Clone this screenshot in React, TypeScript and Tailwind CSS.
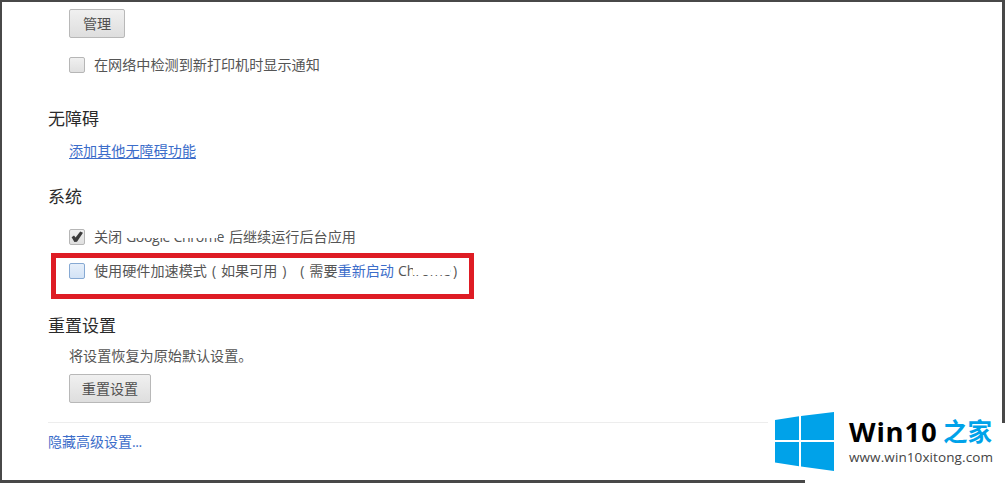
import type { ReactNode } from "react"
import clsx from "clsx"

const cjk = "font-['Open_Sans','Noto_Sans_CJK_SC',sans-serif]"

function Heading({ children }: { children: ReactNode }) {
    return <h2 className="h-6 text-[17px] leading-6 text-[#2a2a2a]">{children}</h2>
}

function Button({ className, children }: { className?: string, children: ReactNode }) {
    return (
        <button
            type="button"
            className={clsx(
                "flex h-[29px] items-center justify-center rounded-[2px] border border-[#b8b8b8] bg-linear-to-b from-[#f0f0f0] to-[#dedede] text-[14.1px] leading-5 text-[#505050]",
                className
            )}
        >
            {children}
        </button>
    )
}

function Checkbox({ checked, focused }: { checked?: boolean, focused?: boolean }) {
    return (
        <span
            className={clsx(
                "flex size-4 shrink-0 items-center justify-center rounded-[2px] border",
                focused
                    ? "border-[#86a9d3] bg-linear-to-b from-[#e6effa] to-[#d3e3f6]"
                    : "border-[#b6b6b6] bg-linear-to-b from-[#f0f0f0] to-[#e0e0e0]"
            )}
        >
            {checked && (
                <svg viewBox="0 0 14 14" className="size-3.5">
                    <path d="M1.6 7.2 4 5.6 5.6 7.6 10.2 1.6 13 2.8 7 11.8 4.4 12Z" fill="#3c3c3c" />
                </svg>
            )}
        </span>
    )
}

function Row({ children }: { children: ReactNode }) {
    return <div className="ml-[21px] flex h-5 items-center whitespace-pre text-[14.12px] leading-5">{children}</div>
}

function Watermark() {
    return (
        <div className="absolute top-[403px] left-[768px] h-[80px] w-[237px]">
            <div className="absolute top-0 left-0 h-[76px] w-[234px] bg-white" />
            <div className="absolute top-[20px] right-0 h-[60px] w-[200px] bg-white" />
            <div className="relative flex">
                <svg viewBox="0 0 59 59" className="mt-[9px] ml-[7px] size-[59px] shrink-0" fill="#00a2e9">
                    <path d="M0 8 24 4.3V28H0ZM26 4 59 0V28H26ZM0 30H24V54.2L0 50.5ZM26 30H59V59L26 54.5Z" />
                </svg>
                <div className="ml-[15px] whitespace-nowrap">
                    <div className="mt-[13px] flex h-8 items-center">
                        <span className="w-[94px] text-[27.5px] leading-8 font-bold tracking-[0.8px] text-black">Win10</span>
                        <span className="text-[24.5px] leading-8 font-bold text-[#00a2e9]">之家</span>
                    </div>
                    <div className="text-[13.5px] leading-[18px] tracking-[0.1px] text-[#444]">www.win10xitong.com</div>
                </div>
            </div>
        </div>
    )
}

export default function App() {
    return (
        <div className={`${cjk} relative h-[483px] w-[1005px] overflow-hidden`}>
            <main className="h-full border-t-2 border-r-[3px] border-b-[3px] border-l-2 border-[#484848] bg-white pl-[46px] text-[#555]">
                <Button className="mt-[7px] ml-[21px] w-[56px]">管理</Button>
                <div className="mt-[17px]">
                    <Row>
                        <Checkbox />
                        <span className="ml-[9px]">在网络中检测到新打印机时显示通知</span>
                    </Row>
                </div>

                <section className="mt-8">
                    <Heading>无障碍</Heading>
                    <div className="mt-[10px]">
                        <Row>
                            <a className="text-[#3c6dca] underline underline-offset-2">添加其他无障碍功能</a>
                        </Row>
                    </div>
                </section>

                <section className="mt-6">
                    <Heading>系统</Heading>
                    <div className="mt-[18px]">
                        <Row>
                            <Checkbox checked />
                            <span className="ml-[9px]">关闭 </span>
                            <span className="relative w-[99px] tracking-[-0.35px]">
                                Google Chrome
                                <span className="absolute -top-px left-0 h-[12px] w-[92px] bg-white" />
                            </span>
                            <span className="ml-1">后继续运行后台应用</span>
                        </Row>
                    </div>
                    <div className="mt-[6px] ml-[3px] h-[46px] w-[423px] border-[5px] border-[#de1c24] pt-[3px]">
                        <div className="-ml-2">
                            <Row>
                                <Checkbox focused />
                                <span className="ml-[9px]">使用硬件加速模式</span>
                                <span className="w-[14px] pl-[5px]">(</span>
                                <span>如果可用</span>
                                <span className="w-[18px] pl-[5px]">)</span>
                                <span className="w-[14px] pl-[5px]">(</span>
                                <span>需要</span>
                                <a className="text-[#3c6dca]">重新启动</a>
                                <span className="relative ml-1 w-[50px]">
                                    Chrome
                                    <span className="absolute top-0 left-[15px] h-[14px] w-[37px] bg-white" />
                                </span>
                                <span className="pl-[5px]">)</span>
                            </Row>
                        </div>
                    </div>
                </section>

                <section className="mt-[15px]">
                    <Heading>重置设置</Heading>
                    <div className="mt-[8px]">
                        <Row>将设置恢复为原始默认设置。</Row>
                    </div>
                    <Button className="mt-2 ml-[21px] w-[82px]">重置设置</Button>
                </section>

                <footer className="mt-[19px] border-t border-[#ededed] pt-[9px]">
                    <a className="block text-[14px] leading-5 text-[#3c6dca]">隐藏高级设置<span className="tracking-[-0.4px]">...</span></a>
                </footer>
            </main>
            <Watermark />
        </div>
    )
}
